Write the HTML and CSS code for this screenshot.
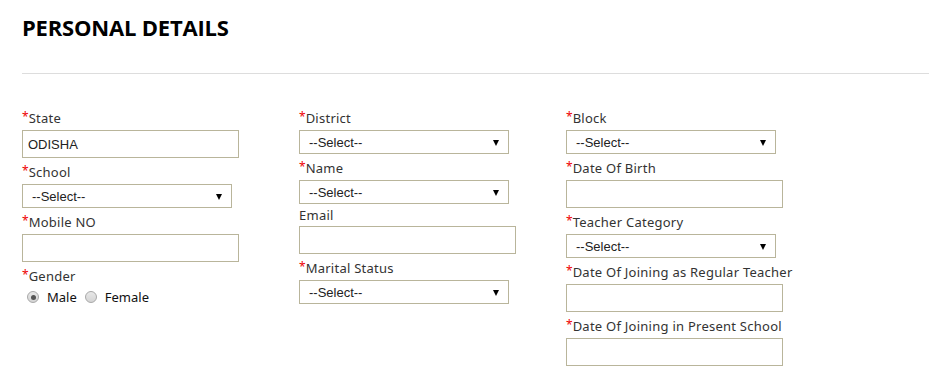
FILE: index.html
```html
<!DOCTYPE html>
<html lang="en">
<head>
    <meta charset="UTF-8">
    <title>Personal Details</title>
    <link rel="stylesheet" href="styles.css">
</head>
<body>
    <div class="page">
        <h1>PERSONAL DETAILS</h1>
        <hr class="divider">

        <div class="form-grid">
            <div class="col">
                <label class="field-label"><span class="req">*</span>State</label>
                <input class="text-input" type="text" value="ODISHA">

                <label class="field-label"><span class="req">*</span>School</label>
                <div class="select-box"><span>--Select--</span></div>

                <label class="field-label"><span class="req">*</span>Mobile NO</label>
                <input class="text-input" type="text">

                <label class="field-label"><span class="req">*</span>Gender</label>
                <div class="radio-row">
                    <label class="radio-item"><span class="radio checked"></span>Male</label>
                    <label class="radio-item"><span class="radio"></span>Female</label>
                </div>
            </div>

            <div class="col">
                <label class="field-label"><span class="req">*</span>District</label>
                <div class="select-box"><span>--Select--</span></div>

                <label class="field-label"><span class="req">*</span>Name</label>
                <div class="select-box"><span>--Select--</span></div>

                <label class="field-label plain">Email</label>
                <input class="text-input" type="text">

                <label class="field-label"><span class="req">*</span>Marital Status</label>
                <div class="select-box"><span>--Select--</span></div>
            </div>

            <div class="col">
                <label class="field-label"><span class="req">*</span>Block</label>
                <div class="select-box"><span>--Select--</span></div>

                <label class="field-label"><span class="req">*</span>Date Of Birth</label>
                <input class="text-input" type="text">

                <label class="field-label"><span class="req">*</span>Teacher Category</label>
                <div class="select-box"><span>--Select--</span></div>

                <label class="field-label"><span class="req">*</span>Date Of Joining as Regular Teacher</label>
                <input class="text-input" type="text">

                <label class="field-label"><span class="req">*</span>Date Of Joining in Present School</label>
                <input class="text-input" type="text">
            </div>
        </div>
    </div>
</body>
</html>
```

FILE: styles.css
```css
body {
    margin: 0;
    background: #fff;
    font-family: "Noto Sans", sans-serif;
    color: #333;
}
.page {
    padding: 0 1px 0 22px;
}
h1 {
    margin: 0;
    padding-top: 12px;
    font-family: "Open Sans", sans-serif;
    font-weight: 700;
    font-size: 22px;
    letter-spacing: -0.2px;
    line-height: 30px;
    color: #000;
}
.divider {
    border: 0;
    border-top: 1px solid #ddd;
    margin: 31px 0 0;
}
.form-grid {
    display: grid;
    grid-template-columns: 277px 267px 1fr;
    margin-top: 30px;
}
.col {
    display: flex;
    flex-direction: column;
    align-items: flex-start;
}
.field-label {
    display: block;
    height: 23px;
    font-size: 13px;
    letter-spacing: 0.25px;
    line-height: 22px;
    padding-top: 3px;
    color: #333;
}
.field-label.plain {
    height: 22px;
    padding-top: 0;
}
.req {
    position: relative;
    top: -2px;
    line-height: 0;
    color: #e00;
    font-size: 12px;
    letter-spacing: 0;
}
.text-input {
    box-sizing: border-box;
    width: 217px;
    height: 28px;
    margin: 0;
    padding: 0 5px;
    border: 1px solid #b9b59b;
    font-family: "Liberation Sans", Arial, sans-serif;
    font-size: 13px;
    color: #222;
    outline: none;
}
.select-box {
    position: relative;
    box-sizing: border-box;
    width: 210px;
    height: 24px;
    padding-left: 9px;
    border: 1px solid #b9b59b;
    font-family: "Liberation Sans", Arial, sans-serif;
    font-size: 13px;
    line-height: 23px;
    color: #222;
}
.select-box::after {
    content: "";
    position: absolute;
    right: 9px;
    top: 9px;
    border-left: 3.5px solid transparent;
    border-right: 3.5px solid transparent;
    border-top: 6px solid #000;
}
.radio-row {
    display: flex;
    align-items: center;
    height: 18px;
    padding-left: 5px;
}
.radio-item {
    display: flex;
    align-items: center;
    font-size: 13px;
    color: #111;
    margin-right: 8px;
}
.radio {
    box-sizing: border-box;
    width: 12px;
    height: 12px;
    border-radius: 50%;
    border: 1px solid #a8a8a8;
    background: linear-gradient(#e8e8e8, #d4d4d4);
    margin-right: 8px;
    position: relative;
}
.radio.checked::after {
    content: "";
    position: absolute;
    left: 2.5px;
    top: 2.5px;
    width: 5px;
    height: 5px;
    border-radius: 50%;
    background: #555;
}
```
